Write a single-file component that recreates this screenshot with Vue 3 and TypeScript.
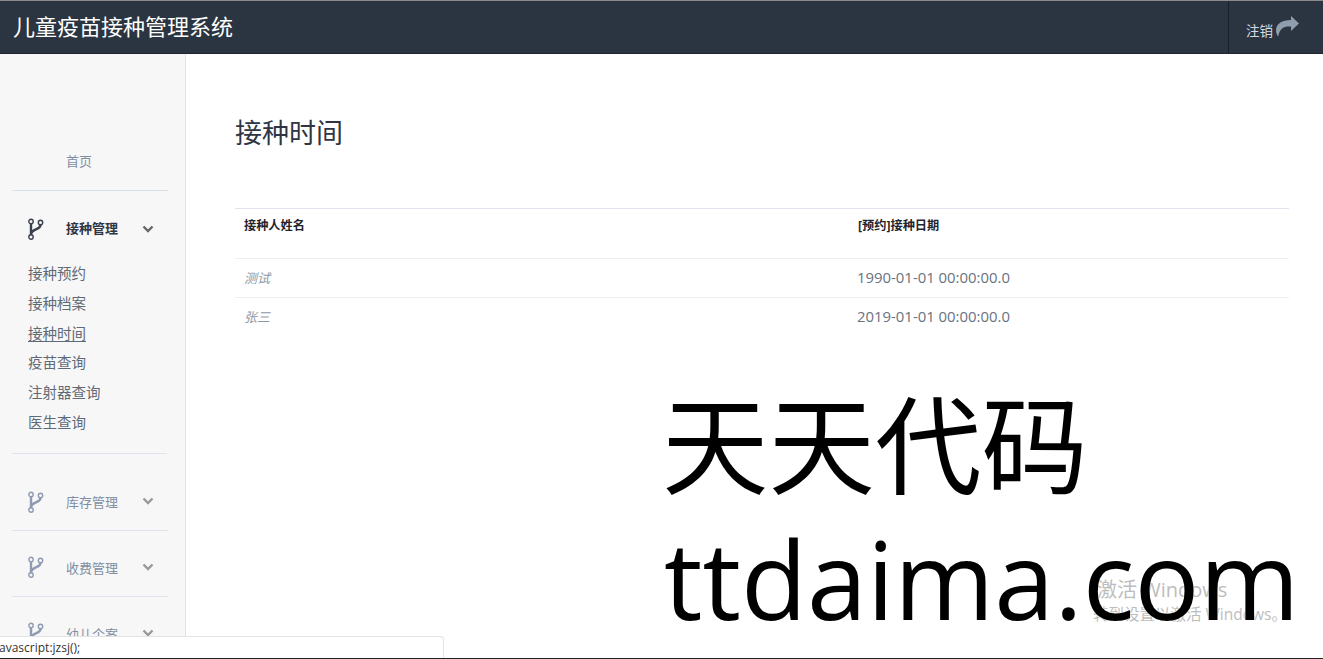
<script setup lang="ts">
const subs: string[] = ['接种预约', '接种档案', '接种时间', '疫苗查询', '注射器查询', '医生查询']
const rows = [
  { name: '测试', date: '1990-01-01 00:00:00.0' },
  { name: '张三', date: '2019-01-01 00:00:00.0' },
]
const groups: { label: string; cls: string }[] = [
  { label: '库存管理', cls: 'first' },
  { label: '收费管理', cls: '' },
  { label: '幼儿个案', cls: '' },
]
</script>

<template>
  <div class="page">
    <header class="top">
      <div class="brand">儿童疫苗接种管理系统</div>
      <a class="logout">
        <span>注销</span>
        <svg class="share" viewBox="0 0 23 21" width="23" height="21">
          <path d="M15 0 L23 7.500 L15 15 V10.500 C9 10 4 11 2.200 20.500 C0.500 18.500 0 16 0 14.500 C0 8 6 4 15 4 Z" fill="#8f9dac" />
        </svg>
      </a>
    </header>
    <div class="body">
      <aside class="side">
        <div class="home">首页</div>
        <div class="group active">
          <svg class="fork" viewBox="0 0 16 22" width="16" height="22">
            <g fill="none" stroke="currentColor" stroke-width="1.400">
              <circle cx="3" cy="3.500" r="2.200" />
              <circle cx="3" cy="19" r="2.200" />
              <circle cx="12.500" cy="4.500" r="2.200" />
            </g>
            <path d="M3 5.500 V17 M12.500 7 C12.500 12 5 10 3 15.500" fill="none" stroke="currentColor" stroke-width="2.400" />
          </svg>
          <span class="label">接种管理</span>
          <svg class="chev" viewBox="0 0 12 9" width="12" height="9">
            <path d="M1.500 1.500 L6 6 L10.500 1.500" fill="none" stroke="currentColor" stroke-width="2.400" />
          </svg>
        </div>
        <ul class="subs">
          <li v-for="s in subs" :key="s" :class="{ cur: s === '接种时间' }">{{ s }}</li>
        </ul>
        <div v-for="g in groups" :key="g.label" class="group" :class="g.cls">
          <svg class="fork" viewBox="0 0 16 22" width="16" height="22">
            <g fill="none" stroke="currentColor" stroke-width="1.400">
              <circle cx="3" cy="3.500" r="2.200" />
              <circle cx="3" cy="19" r="2.200" />
              <circle cx="12.500" cy="4.500" r="2.200" />
            </g>
            <path d="M3 5.500 V17 M12.500 7 C12.500 12 5 10 3 15.500" fill="none" stroke="currentColor" stroke-width="2.400" />
          </svg>
          <span class="label">{{ g.label }}</span>
          <svg class="chev" viewBox="0 0 12 9" width="12" height="9">
            <path d="M1.500 1.500 L6 6 L10.500 1.500" fill="none" stroke="currentColor" stroke-width="2.400" />
          </svg>
        </div>
      </aside>
      <main class="main">
        <h1>接种时间</h1>
        <table>
          <thead>
            <tr>
              <th class="c1">接种人姓名</th>
              <th class="c2">[预约]接种日期</th>
            </tr>
          </thead>
          <tbody>
            <tr v-for="r in rows" :key="r.name">
              <td class="c1 name">{{ r.name }}</td>
              <td>{{ r.date }}</td>
            </tr>
          </tbody>
        </table>
      </main>
    </div>
    <div class="activate">
      <div class="a1">激活 Windows</div>
      <div class="a2">转到设置以激活 Windows。</div>
    </div>
    <div class="mark">
      <div class="m1">天天代码</div>
      <div class="m2">ttdaima.com</div>
    </div>
    <div class="status">javascript:jzsj();</div>
    <div class="edge"></div>
  </div>
</template>

<style>
html, body { margin: 0; background: #fff; overflow: hidden; }
</style>

<style scoped>
.page {
  position: relative;
  width: 1323px;
  height: 659px;
  overflow: hidden;
  font-family: "Open Sans", "Noto Sans CJK SC", sans-serif;
  color: #676a6c;
}
.top {
  height: 54px;
  box-sizing: border-box;
  border-top: 1px solid #8a8a8a;
  border-bottom: 1px solid #1e2530;
  background: #2b3541;
  display: flex;
  align-items: stretch;
  justify-content: space-between;
}
.brand {
  padding: 8px 0 0 13px;
  font-size: 22px;
  line-height: 34px;
  color: #fff;
}
.logout {
  width: 95px;
  box-sizing: border-box;
  border-left: 1px solid #1a2028;
  display: flex;
  align-items: center;
  padding-left: 17px;
  gap: 3px;
  font-size: 13.500px;
  color: #d5dbe1;
}
.logout span { margin-top: 6px; }
.share { margin-top: -2px; }
.body {
  display: flex;
  height: 605px;
}
.side {
  width: 186px;
  flex: none;
  box-sizing: border-box;
  background: #f7f7f7;
  border-right: 1px solid #dfe4ea;
  padding: 0 17px 0 12px;
  overflow: hidden;
}
.home {
  margin-top: 87px;
  height: 50px;
  box-sizing: border-box;
  line-height: 40px;
  padding-left: 54px;
  font-size: 13px;
  color: #7f8fa4;
  border-bottom: 1px solid #dbe1e9;
}
.group {
  display: flex;
  align-items: center;
  height: 66px;
  padding: 8px 0 0 16px;
  border-bottom: 1px solid #dfe3ed;
  color: #8f9bb3;
  box-sizing: border-box;
}
.group.first { height: 77px; padding-top: 20px; }
.group.active { height: 76px; border: 0; color: #3a3f4c; padding: 0 0 0 16px; }
.fork { flex: none; }
.label {
  margin-left: 22px;
  font-size: 13px;
  width: 53px;
  white-space: nowrap;
  color: #7f8ea3;
}
.active .label { color: #2f3542; font-weight: 700; margin-top: -3px; }
.chev { margin-left: 23px; color: #999; flex: none; }
.active .chev { color: #666; }
.subs {
  list-style: none;
  margin: -8px 0 0;
  padding: 0 0 15px 16px;
  width: 139px;
  border-bottom: 1px solid #dfe3ed;
  font-size: 14.500px;
  color: #606a76;
}
.subs li { height: 29.800px; line-height: 30px; white-space: nowrap; }
.subs li.cur { text-decoration: underline; text-underline-offset: 2px; }
.main {
  flex: 1;
  padding: 54px 34px 0 49px;
}
h1 {
  margin: 0 0 50px;
  height: 50px;
  font-size: 27px;
  font-weight: 400;
  line-height: 50px;
  color: #2f3542;
}
table {
  width: 100%;
  border-collapse: collapse;
  border-top: 1px solid #dfe3ed;
  font-size: 14.900px;
}
th {
  height: 50px;
  padding: 8px 8px 0;
  box-sizing: border-box;
  vertical-align: top;
  text-align: left;
  font-size: 12.200px;
  line-height: 18px;
  font-weight: 700;
  color: #1f232b;
  border-bottom: 1px solid #eef0f3;
}
td {
  height: 39px;
  padding: 0 8px 2px;
  box-sizing: border-box;
  border-bottom: 1px solid #eef0f3;
  color: #6a7280;
}
tbody tr:last-child td { border-bottom: 0; }
.c1 { width: 614px; padding-left: 9px; }
.c2 { padding-left: 9px; }
.name { font-style: italic; font-size: 13px; color: #8f98a6; }
.activate {
  position: absolute;
  left: 1097px;
  top: 577px;
  white-space: nowrap;
  color: #bdbdbd;
}
.a1 { font-size: 20px; line-height: 26px; }
.a2 { font-size: 15.500px; line-height: 20px; margin-left: -4px; margin-top: 1px; }
.mark {
  position: absolute;
  left: 664px;
  top: 380px;
  color: #000;
  white-space: nowrap;
  font-family: "Open Sans", "Noto Sans CJK SC", sans-serif;
  text-shadow: 0 0 2px #fff;
}
.m1 { font-size: 106.500px; line-height: 130px; margin-left: -2px; }
.m2 { font-size: 108px; line-height: 130px; margin-top: 4px; }
.status {
  position: absolute;
  left: -5px;
  top: 636px;
  width: 449px;
  height: 23px;
  box-sizing: border-box;
  background: #fff;
  border: 1px solid #e3e3e3;
  border-bottom: 0;
  border-radius: 0 4px 0 0;
  font-size: 12px;
  line-height: 22px;
  color: #333;
}
.edge {
  position: absolute;
  left: 0;
  right: 0;
  bottom: 0;
  height: 1px;
  background: #222;
}
</style>
